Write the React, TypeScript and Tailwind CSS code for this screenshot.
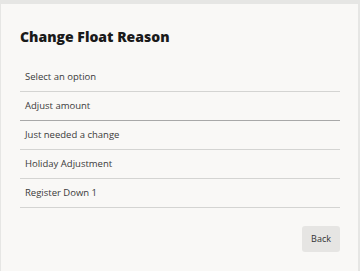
import React from "react";

const options = [
  "Select an option",
  "Adjust amount",
  "Just needed a change",
  "Holiday Adjustment",
  "Register Down 1",
];

export default function App() {
  return (
    <div className="w-[360px] h-[271px] overflow-hidden bg-[#e6e6e4] pt-[4px] pl-[1px] pr-[2px]" style={{ fontFamily: '"Open Sans", "Noto Sans", sans-serif' }}>
      <div className="h-[267px] bg-[#f9f8f6] pl-[19px] pr-[18px] pt-[23px]">
        <h1 className="text-[14px] leading-[20px] font-extrabold text-[#1a1a1a]">Change Float Reason</h1>
        <div className="mt-[16px] flex flex-col">
          {options.map((o, i) => (
            <div
              key={o}
              className={`h-[29px] flex items-center pl-[5px] pt-[1px] text-[9.5px] text-[#3a3a3a] border-b ${i === 1 ? "border-[#a8a8a8]" : "border-[#d4d4d2]"}`}
            >
              {o}
            </div>
          ))}
        </div>
        <div className="flex justify-end mt-[18px]">
          <button className="w-[38px] h-[26px] rounded-[3px] bg-[#e6e5e3] text-[9px] text-[#333]">Back</button>
        </div>
      </div>
    </div>
  );
}
